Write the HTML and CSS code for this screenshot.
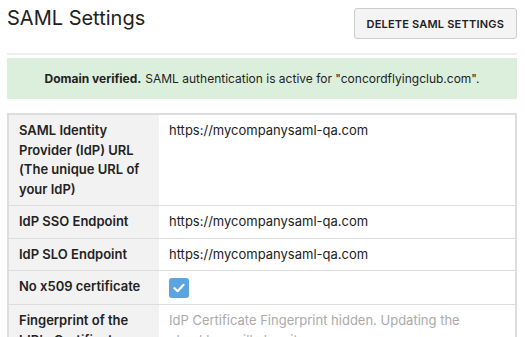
FILE: index.html
```html
<!DOCTYPE html>
<html lang="en">
  <head>
    <meta charset="UTF-8" />
    <meta name="viewport" content="width=device-width, initial-scale=1.0" />
    <title>SAML Settings</title>
    <link rel="stylesheet" href="styles.css">
  </head>
  <body>
    <div class="page">
      <div class="header">
        <h1>SAML Settings</h1>
        <button class="btn">Delete SAML Settings</button>
      </div>
      <hr />
      <div class="alert">
        <b>Domain verified.</b> SAML authentication is active for "concordflyingclub.com".
      </div>
      <table class="settings">
        <tr>
          <th>SAML Identity Provider (IdP) URL (The unique URL of your IdP)</th>
          <td>https://mycompanysaml-qa.com</td>
        </tr>
        <tr>
          <th>IdP SSO Endpoint</th>
          <td>https://mycompanysaml-qa.com</td>
        </tr>
        <tr>
          <th>IdP SLO Endpoint</th>
          <td>https://mycompanysaml-qa.com</td>
        </tr>
        <tr>
          <th>No x509 certificate</th>
          <td>
            <span class="check">
              <svg width="12" height="10" viewBox="0 0 12 10">
                <path d="M1.5 5.2 L4.6 8.2 L10.5 1.8" fill="none" stroke="#fff" stroke-width="2.2" stroke-linecap="round" stroke-linejoin="round" />
              </svg>
            </span>
          </td>
        </tr>
        <tr>
          <th>Fingerprint of the IdP's Certificate</th>
          <td class="muted">IdP Certificate Fingerprint hidden. Updating the checkbox will clear it.</td>
        </tr>
      </table>
    </div>
  </body>
</html>
```

FILE: styles.css
```css
body {
  margin: 0;
  font-family: "Inter", "Liberation Sans", sans-serif;
  color: #222;
  background-color: #fff;
}
.page {
  width: 510px;
  padding: 8px 7px;
}
.header {
  display: flex;
  justify-content: space-between;
  align-items: flex-start;
}
h1 {
  margin: 0;
  font-size: 20px;
  font-weight: 400;
  line-height: 21px;
}
.btn {
  height: 31px;
  padding: 0 12px;
  background-color: #f4f4f4;
  border: 1px solid #ccc;
  border-radius: 3px;
  color: #222;
  font-family: inherit;
  font-size: 11px;
  font-weight: 600;
  text-transform: uppercase;
  letter-spacing: 0.2px;
}
hr {
  margin: 14px 0 3px;
  border: none;
  border-top: 2px solid #eee;
}
.alert {
  height: 41px;
  display: flex;
  align-items: center;
  justify-content: center;
  background-color: #dcefdc;
  font-size: 12px;
  color: #222;
}
.alert b {
  font-weight: 700;
  margin-right: 4px;
}
.settings {
  margin-top: 14px;
  width: 100%;
  border-collapse: collapse;
  border: 2px solid #ddd;
  font-size: 13px;
  line-height: 19.5px;
}
.settings th,
.settings td {
  padding: 6px 10px;
  border-top: 1px solid #ddd;
  text-align: left;
  vertical-align: top;
}
.settings th {
  width: 130px;
  background-color: #f2f2f2;
  font-weight: 600;
}
.muted {
  color: #aaa;
}
.check {
  display: inline-flex;
  align-items: center;
  justify-content: center;
  width: 20px;
  height: 20px;
  margin-top: 1px;
  border-radius: 3px;
  background-color: #5ba4e0;
  vertical-align: middle;
}
```
